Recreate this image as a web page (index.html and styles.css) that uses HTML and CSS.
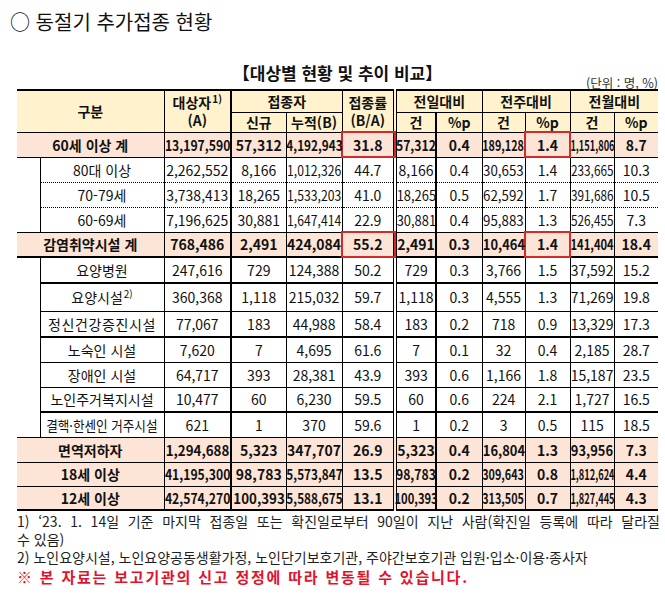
FILE: index.html
```html
<!DOCTYPE html>
<html lang="ko">
<head>
<meta charset="utf-8">
<title>동절기 추가접종 현황</title>
<link rel="stylesheet" href="styles.css">
</head>
<body>
<div class="page">
  <h1 class="title">○ 동절기 추가접종 현황</h1>
  <div class="subtitle">【대상별 현황 및 추이 비교】</div>
  <div class="unit">(단위 : 명, %)</div>
  <table class="grid">
    <colgroup>
      <col class="c-ind"><col class="c-lbl"><col class="c-tgt"><col class="c-new"><col class="c-cum"><col class="c-rate">
      <col class="c-d1"><col class="c-d2"><col class="c-w1"><col class="c-w2"><col class="c-m1"><col class="c-m2">
    </colgroup>
    <thead>
      <tr class="h1">
        <th colspan="2" rowspan="2">구분</th>
        <th rowspan="2" class="tgt two"><div class="ln">대상자<sup>1)</sup></div><div class="ln">(A)</div></th>
        <th colspan="2">접종자</th>
        <th rowspan="2" class="rate two"><div class="ln">접종률</div><div class="ln">(B/A)</div></th>
        <th colspan="2">전일대비</th>
        <th colspan="2">전주대비</th>
        <th colspan="2">전월대비</th>
      </tr>
      <tr class="h2">
        <th>신규</th><th>누적(B)</th>
        <th class="d1">건</th><th>%p</th>
        <th>건</th><th>%p</th>
        <th>건</th><th>%p</th>
      </tr>
    </thead>
    <tbody>
      <tr class="sum r25">
        <td colspan="2">60세 이상 계</td>
        <td class="tgt"><span class="s87">13,197,590</span></td>
        <td>57,312</td>
        <td><span class="s84">4,192,943</span></td>
        <td class="rate hl">31.8</td>
        <td class="d1"><span class="s87">57,312</span></td>
        <td>0.4</td>
        <td><span class="s77">189,128</span></td>
        <td class="hl">1.4</td>
        <td><span class="s66">1,151,806</span></td>
        <td>8.7</td>
      </tr>
      <tr class="dot r25">
        <td rowspan="3" class="ind"></td>
        <td>80대 이상</td>
        <td class="tgt">2,262,552</td>
        <td>8,166</td>
        <td><span class="s87">1,012,326</span></td>
        <td class="rate">44.7</td>
        <td class="d1">8,166</td>
        <td>0.4</td>
        <td><span class="s95">30,653</span></td>
        <td>1.4</td>
        <td><span class="s84">233,665</span></td>
        <td>10.3</td>
      </tr>
      <tr class="dot r25">
        <td>70-79세</td>
        <td class="tgt">3,738,413</td>
        <td>18,265</td>
        <td><span class="s87">1,533,203</span></td>
        <td class="rate">41.0</td>
        <td class="d1"><span class="s92">18,265</span></td>
        <td>0.5</td>
        <td><span class="s95">62,592</span></td>
        <td>1.7</td>
        <td><span class="s84">391,686</span></td>
        <td>10.5</td>
      </tr>
      <tr class="r25">
        <td>60-69세</td>
        <td class="tgt">7,196,625</td>
        <td>30,881</td>
        <td><span class="s87">1,647,414</span></td>
        <td class="rate">22.9</td>
        <td class="d1"><span class="s92">30,881</span></td>
        <td>0.4</td>
        <td><span class="s95">95,883</span></td>
        <td>1.3</td>
        <td><span class="s84">526,455</span></td>
        <td>7.3</td>
      </tr>
      <tr class="sum thick r25">
        <td colspan="2">감염취약시설 계</td>
        <td class="tgt">768,486</td>
        <td>2,491</td>
        <td>424,084</td>
        <td class="rate hl">55.2</td>
        <td class="d1">2,491</td>
        <td>0.3</td>
        <td><span class="s92">10,464</span></td>
        <td class="hl">1.4</td>
        <td><span class="s80">141,404</span></td>
        <td>18.4</td>
      </tr>
      <tr class="thick r26">
        <td rowspan="7" class="ind"></td>
        <td>요양병원</td>
        <td class="tgt">247,616</td>
        <td>729</td>
        <td>124,388</td>
        <td class="rate">50.2</td>
        <td class="d1">729</td>
        <td>0.3</td>
        <td>3,766</td>
        <td>1.5</td>
        <td>37,592</td>
        <td>15.2</td>
      </tr>
      <tr class="r28">
        <td>요양시설<sup>2)</sup></td>
        <td class="tgt">360,368</td>
        <td>1,118</td>
        <td>215,032</td>
        <td class="rate">59.7</td>
        <td class="d1">1,118</td>
        <td>0.3</td>
        <td>4,555</td>
        <td>1.3</td>
        <td>71,269</td>
        <td>19.8</td>
      </tr>
      <tr class="thick r26">
        <td class="wide">정신건강증진시설</td>
        <td class="tgt">77,067</td>
        <td>183</td>
        <td>44,988</td>
        <td class="rate">58.4</td>
        <td class="d1">183</td>
        <td>0.2</td>
        <td>718</td>
        <td>0.9</td>
        <td>13,329</td>
        <td>17.3</td>
      </tr>
      <tr class="r25">
        <td>노숙인 시설</td>
        <td class="tgt">7,620</td>
        <td>7</td>
        <td>4,695</td>
        <td class="rate">61.6</td>
        <td class="d1">7</td>
        <td>0.1</td>
        <td>32</td>
        <td>0.4</td>
        <td>2,185</td>
        <td>28.7</td>
      </tr>
      <tr class="r25">
        <td>장애인 시설</td>
        <td class="tgt">64,717</td>
        <td>393</td>
        <td>28,381</td>
        <td class="rate">43.9</td>
        <td class="d1">393</td>
        <td>0.6</td>
        <td>1,166</td>
        <td>1.8</td>
        <td>15,187</td>
        <td>23.5</td>
      </tr>
      <tr class="thick r25">
        <td>노인주거복지시설</td>
        <td class="tgt">10,477</td>
        <td>60</td>
        <td>6,230</td>
        <td class="rate">59.5</td>
        <td class="d1">60</td>
        <td>0.6</td>
        <td>224</td>
        <td>2.1</td>
        <td>1,727</td>
        <td>16.5</td>
      </tr>
      <tr class="r25">
        <td><span class="s90">결핵·한센인 거주시설</span></td>
        <td class="tgt">621</td>
        <td>1</td>
        <td>370</td>
        <td class="rate">59.6</td>
        <td class="d1">1</td>
        <td>0.2</td>
        <td>3</td>
        <td>0.5</td>
        <td>115</td>
        <td>18.5</td>
      </tr>
      <tr class="sum r25">
        <td colspan="2">면역저하자</td>
        <td class="tgt"><span class="s95">1,294,688</span></td>
        <td>5,323</td>
        <td>347,707</td>
        <td class="rate">26.9</td>
        <td class="d1">5,323</td>
        <td>0.4</td>
        <td><span class="s92">16,804</span></td>
        <td>1.3</td>
        <td><span class="s92">93,956</span></td>
        <td>7.3</td>
      </tr>
      <tr class="sum r24">
        <td colspan="2">18세 이상</td>
        <td class="tgt"><span class="s87">41,195,300</span></td>
        <td>98,783</td>
        <td><span class="s84">5,573,847</span></td>
        <td class="rate">13.5</td>
        <td class="d1"><span class="s87">98,783</span></td>
        <td>0.2</td>
        <td><span class="s77">309,643</span></td>
        <td>0.8</td>
        <td><span class="s66">1,812,624</span></td>
        <td>4.4</td>
      </tr>
      <tr class="sum last r24">
        <td colspan="2">12세 이상</td>
        <td class="tgt"><span class="s87">42,574,270</span></td>
        <td><span class="s95">100,393</span></td>
        <td><span class="s84">5,588,675</span></td>
        <td class="rate">13.1</td>
        <td class="d1"><span class="s80">100,393</span></td>
        <td>0.2</td>
        <td><span class="s77">313,505</span></td>
        <td>0.7</td>
        <td><span class="s66">1,827,445</span></td>
        <td>4.3</td>
      </tr>
    </tbody>
  </table>
  <div class="notes">
    <div class="n1">1) ‘23. 1. 14일 기준 마지막 접종일 또는 확진일로부터 90일이 지난 사람(확진일 등록에 따라 달라질</div>
    <div>수 있음)</div>
    <div>2) 노인요양시설, 노인요양공동생활가정, 노인단기보호기관, 주야간보호기관 입원·입소·이용·종사자</div>
    <div class="warn">※ 본 자료는 보고기관의 신고 정정에 따라 변동될 수 있습니다.</div>
  </div>
</div>
</body>
</html>
```

FILE: styles.css
```css
* { box-sizing: border-box; }
html, body { margin: 0; padding: 0; background: #ffffff; }
body {
  width: 665px;
  font-family: "Noto Sans CJK KR", "Noto Sans", sans-serif;
  color: #111111;
}
.page { padding: 10px 0 0 17px; width: 658px; }

.title {
  margin: 0 0 0 -7px;
  font-size: 20px;
  font-weight: 400;
  line-height: 24px;
  color: #111;
}
.subtitle {
  margin-top: 29px;
  text-align: center;
  font-size: 17px;
  font-weight: 700;
  line-height: 20px;
}
.unit {
  margin-top: -6px;
  text-align: right;
  font-size: 12.5px;
  line-height: 12px;
  color: #333;
}

.grid {
  width: 641px;
  table-layout: fixed;
  border-collapse: collapse;
}
.c-ind { width: 23px; }
.c-lbl { width: 124px; }
.c-tgt { width: 67px; }
.c-new { width: 55px; }
.c-cum { width: 56px; }
.c-rate { width: 53px; }
.c-d1 { width: 41px; }
.c-d2 { width: 46px; }
.c-w1 { width: 43px; }
.c-w2 { width: 45px; }
.c-m1 { width: 44px; }
.c-m2 { width: 44px; }

.grid th, .grid td {
  padding: 0;
  border: 1px solid #000;
  text-align: center;
  vertical-align: middle;
  font-size: 14px;
  line-height: 16px;
  white-space: nowrap;
  overflow: visible;
}
.grid th {
  background: #fff2cc;
  font-weight: 700;
}
.grid tr > :first-child { border-left: none; }
.grid tr > :last-child { border-right: none; }
.grid thead tr.h1 th { border-top: 2px solid #000; }
.h1 { height: 22px; }
.h2 { height: 20px; }
.grid th.two .ln { line-height: 18px; height: 18px; }
.grid sup {
  font-size: 10px;
  line-height: 0;
  vertical-align: 5px;
  margin-left: 1px;
}

.grid .tgt { border-right-width: 2px; }
.grid .rate { border-right: 4px double #000; }
.grid .d1 { border-right-width: 2px; }

.r24 { height: 24px; }
.r25 { height: 25px; }
.r26 { height: 26px; }
.r28 { height: 28px; }

.sum td { background: #fce4d6; font-weight: 700; }
.thick td { border-bottom-width: 2px; }
.last td { border-bottom-width: 2px; }
.dot td { border-bottom-style: dotted; }
.dot + tr td { border-top-style: dotted; }
.grid td.ind { background: #fff; border-top-style: solid; border-bottom-style: solid; border-bottom-width: 1px; }

.hl { outline: 2px solid #d42a2a; outline-offset: -1px; }
.wide { letter-spacing: 0.6px; }

.s95, .s92, .s90, .s87, .s84, .s80, .s77, .s66 {
  display: inline-block;
  margin: 0 -14px;
}
.s95 { transform: scaleX(0.95); }
.s92 { transform: scaleX(0.92); }
.s90 { transform: scaleX(0.9); }
.s87 { transform: scaleX(0.87); }
.s84 { transform: scaleX(0.84); }
.s80 { transform: scaleX(0.8); }
.s77 { transform: scaleX(0.77); }
.s66 { transform: scaleX(0.66); }

.notes {
  width: 643px;
  margin-top: 1px;
  font-size: 14px;
  line-height: 18px;
  color: #1e1e1e;
}
.n1 { text-align: justify; text-align-last: justify; }
.warn {
  margin-top: 1px;
  color: #e3122c;
  font-weight: 700;
  font-size: 15px;
  letter-spacing: 1.8px;
  line-height: 20px;
}
```
